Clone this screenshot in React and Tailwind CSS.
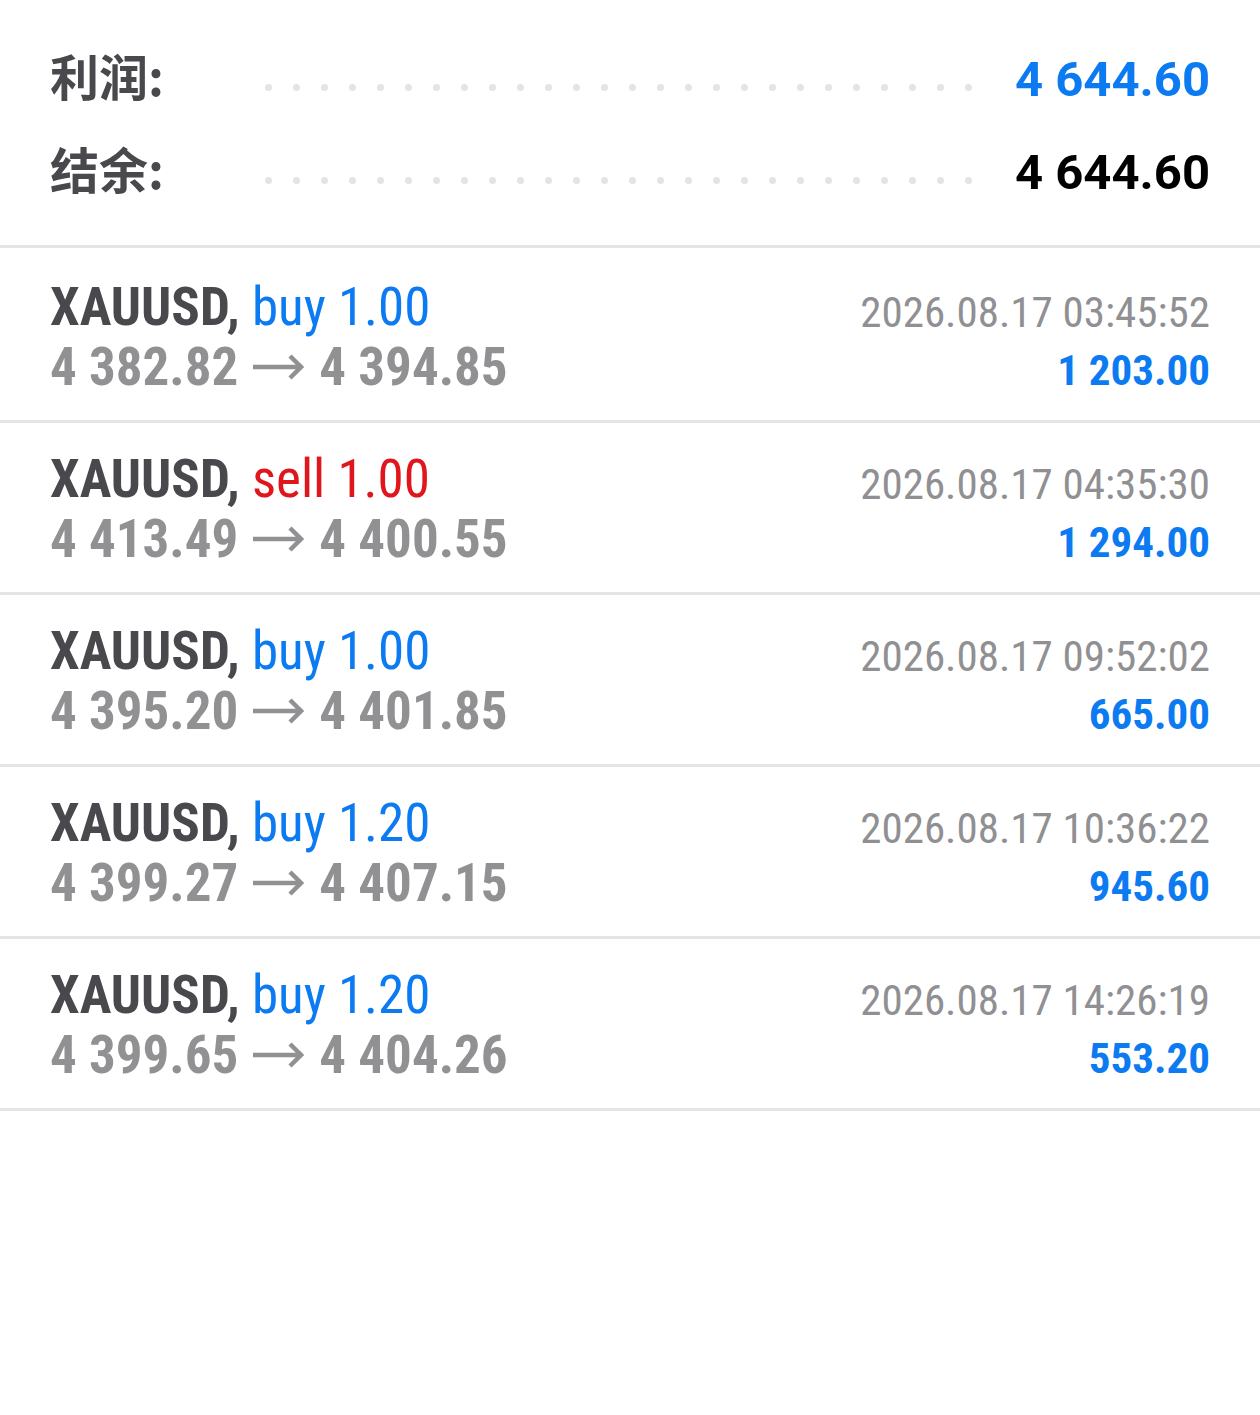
import React from 'react';

const trades = [
  { side: 'buy', lots: '1.00', open: '4 382.82', close: '4 394.85', time: '2026.08.17 03:45:52', profit: '1 203.00' },
  { side: 'sell', lots: '1.00', open: '4 413.49', close: '4 400.55', time: '2026.08.17 04:35:30', profit: '1 294.00' },
  { side: 'buy', lots: '1.00', open: '4 395.20', close: '4 401.85', time: '2026.08.17 09:52:02', profit: '665.00' },
  { side: 'buy', lots: '1.20', open: '4 399.27', close: '4 407.15', time: '2026.08.17 10:36:22', profit: '945.60' },
  { side: 'buy', lots: '1.20', open: '4 399.65', close: '4 404.26', time: '2026.08.17 14:26:19', profit: '553.20' },
];

const dots = Array.from({ length: 26 });

function Arrow() {
  return (
    <svg
      className="inline-block mx-[15px] align-[5px]"
      width="51"
      height="26"
      viewBox="0 0 51 26"
      fill="none"
      stroke="#919194"
      strokeWidth="4.5"
    >
      <path d="M0 13H48" />
      <path d="M37 2L48 13L37 24" strokeLinejoin="miter" />
    </svg>
  );
}

function SummaryRow({ label, value, valueClass }) {
  return (
    <div className="flex items-baseline h-[93px]">
      <div className="w-[215px] shrink-0 font-['Noto_Sans_CJK_SC',sans-serif] font-bold text-[49px] leading-[93px] text-[#48484d]">
        {label}
      </div>
      <div className="w-[707px] shrink-0 self-start mt-[56px] h-[7px] flex justify-between">
        {dots.map((_, i) => (
          <span key={i} className="block w-[7px] h-[7px] rounded-full bg-[#e4e4e4]" />
        ))}
      </div>
      <div className={`flex-1 text-right font-['Roboto',sans-serif] font-bold text-[49px] leading-[93px] ${valueClass}`}>
        {value}
      </div>
    </div>
  );
}

function TradeRow({ trade }) {
  const sideColor = trade.side === 'sell' ? 'text-[#e0161d]' : 'text-[#0c7bf2]';
  return (
    <div className="h-[172px] border-b-[3px] border-[#e5e5e5] px-[50px] flex justify-between font-['Roboto_Condensed',Roboto,sans-serif] font-stretch-condensed">
      <div className="pt-[26px] text-[53px] leading-[60px] whitespace-nowrap">
        <div>
          <span className="font-bold text-[#48484d]">XAUUSD,</span>{' '}
          <span className={sideColor}>{trade.side} {trade.lots}</span>
        </div>
        <div className="font-bold text-[#919194]">
          {trade.open}
          <Arrow />
          {trade.close}
        </div>
      </div>
      <div className="pt-[32px] text-right whitespace-nowrap">
        <div className="text-[43px] leading-[58px] text-[#909093]">{trade.time}</div>
        <div className="text-[43px] leading-[58px] font-bold text-[#0c7bf2]">{trade.profit}</div>
      </div>
    </div>
  );
}

export default function App() {
  return (
    <div className="w-[1260px] min-h-[1415px] bg-white">
      <div className="px-[50px] pt-[28px] pb-[31px] border-b-[3px] border-[#e5e5e5]">
        <SummaryRow label="利润:" value="4 644.60" valueClass="text-[#0c7bf2]" />
        <SummaryRow label="结余:" value="4 644.60" valueClass="text-black" />
      </div>
      <div className="pt-[3px]">
        {trades.map((t, i) => (
          <TradeRow key={i} trade={t} />
        ))}
      </div>
    </div>
  );
}
